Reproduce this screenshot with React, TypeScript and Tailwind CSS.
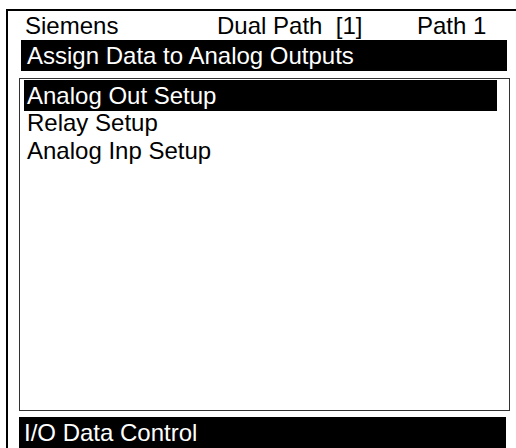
import React from 'react';

const items = ['Analog Out Setup', 'Relay Setup', 'Analog Inp Setup'];

const App = () => {
  return (
    <div
      className="h-[448px] w-[516px] overflow-hidden bg-white pl-[6px] pt-[9px] text-black"
      style={{ fontFamily: '"Liberation Sans", Arial, sans-serif' }}
    >
      {/* Frame */}
      <div className="flex h-[439px] flex-col border-l-2 border-t-2 border-black pl-[11px] pr-[6px] text-[24px]">
        {/* Header */}
        <div className="flex h-[29px] items-center leading-none">
          <span className="ml-[6px] w-[192px]">Siemens</span>
          <span className="w-[200px] whitespace-pre">Dual Path  [1]</span>
          <span>Path 1</span>
        </div>

        {/* Screen title */}
        <div className="ml-[2px] mr-[3px] h-[31px] bg-black pl-[6px] leading-[31px] text-white">
          Assign Data to Analog Outputs
        </div>

        {/* Menu list */}
        <div className="mt-[7px] h-[333px] border border-[#333] px-[4px] pt-[1px]">
          <div className="mr-[8px] h-[31px] bg-black pl-[3px] leading-[31px] text-white">{items[0]}</div>
          <div className="-mt-[2px] pl-[3px]">
            {items.slice(1).map((item) => (
              <div key={item} className="leading-[28px]">
                {item}
              </div>
            ))}
          </div>
        </div>

        {/* Footer */}
        <div className="mr-[4px] mt-[6px] flex-1 bg-black pl-[5px] leading-[31px] text-white">I/O Data Control</div>
      </div>
    </div>
  );
};

export default App;
